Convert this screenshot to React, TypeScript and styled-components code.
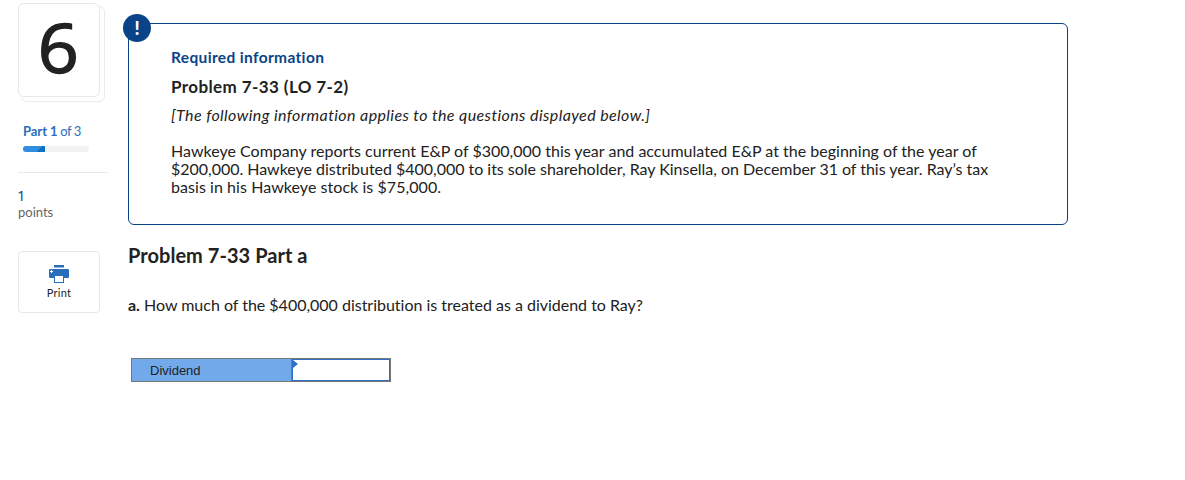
import React from 'react';
import styled, { createGlobalStyle } from 'styled-components';

const GlobalStyle = createGlobalStyle`
  * {
    box-sizing: border-box;
  }

  body {
    margin: 0;
    background-color: #ffffff;
    color: #222222;
    font-family: Lato, 'Liberation Sans', sans-serif;
    font-variant-ligatures: none;
  }
`;

const Page = styled.div`
  display: flex;
  align-items: flex-start;
  gap: 20px;
  width: 1185px;
  height: 480px;
  padding-left: 18px;
  overflow: hidden;
`;

const Sidebar = styled.aside`
  display: flex;
  flex-direction: column;
  width: 90px;
  padding-top: 3px;
`;

const QuestionNumber = styled.div`
  position: relative;
  display: flex;
  align-items: center;
  justify-content: center;
  width: 82px;
  height: 94px;
  background-color: #ffffff;
  border: 1px solid #e8e8e8;
  border-radius: 6px;
  font-family: 'Open Sans', 'Noto Sans', sans-serif;
  font-size: 67px;
  line-height: 90px;

  span {
    margin: -6px 2px 0 0;
    transform: scaleX(1.07);
    -webkit-text-stroke: 1.4px #222222;
  }

  /* second sheet peeking out from behind the card */
  &::after {
    content: '';
    position: absolute;
    z-index: -1;
    top: 2px;
    left: 2px;
    width: 82px;
    height: 94px;
    border: 1px solid #ebebeb;
    border-radius: 6px;
  }
`;

const PartLabel = styled.div`
  margin: 26px 0 0 5px;
  font-size: 13px;
  line-height: 17px;
  letter-spacing: -0.5px;
  color: #2a6ebb;
  white-space: nowrap;

  b {
    letter-spacing: -0.05px;
  }
`;

const ProgressTrack = styled.div`
  width: 66px;
  height: 6px;
  margin: 6px 0 0 5px;
  border-radius: 3px;
  background-color: #f2f2f2;
  overflow: hidden;
`;

const ProgressFill = styled.div`
  height: 100%;
  background: linear-gradient(135deg, #308de0 0 68%, #0b70c4 68%);
`;

const Divider = styled.hr`
  width: 90px;
  height: 1px;
  margin: 20px 0 13px;
  border: 0;
  background-color: #e9e9e9;
`;

const PointsValue = styled.div`
  margin: 0 0 1px -1px;
  font-family: 'Open Sans', 'Noto Sans', sans-serif;
  font-size: 15px;
  line-height: 18px;
  color: #0a4387;
`;

const PointsLabel = styled.div`
  font-size: 13px;
  line-height: 14px;
  color: #666666;
`;

const PrintButton = styled.button`
  display: flex;
  flex-direction: column;
  align-items: center;
  width: 82px;
  height: 62px;
  margin-top: 32px;
  padding: 13px 0 0;
  border: 1px solid #e8e8e8;
  border-radius: 4px;
  background-color: #ffffff;
  color: #222222;
  font-family: inherit;
  font-size: 11px;
  line-height: 13px;
  letter-spacing: 0.3px;

  svg {
    display: block;
    margin-bottom: 3px;
  }
`;

const Content = styled.main`
  width: 940px;
  padding-top: 23px;
`;

const InfoBox = styled.section`
  position: relative;
  height: 202px;
  padding: 24px 42px 0;
  border: 1px solid #0a4387;
  border-radius: 6px;
`;

const InfoBadge = styled.div`
  position: absolute;
  top: -10px;
  left: -6px;
  width: 28px;
  height: 28px;
  border-radius: 50%;
  background-color: #0a4387;
  color: #ffffff;
  font-size: 18px;
  font-weight: 900;
  line-height: 28px;
  text-align: center;
`;

const InfoLabel = styled.h2<{ $tracking: number }>`
  margin: 0;
  font-size: 15.5px;
  font-weight: 700;
  line-height: 18px;
  letter-spacing: ${({ $tracking }) => $tracking}px;
  color: #0a4387;
`;

const InfoTitle = styled.h3<{ $tracking: number }>`
  margin: 11px 0 0;
  font-size: 17px;
  font-weight: 700;
  line-height: 20px;
  letter-spacing: ${({ $tracking }) => $tracking}px;
`;

const Line = styled.span<{ $tracking: number }>`
  display: block;
  width: fit-content;
  letter-spacing: ${({ $tracking }) => $tracking}px;
  white-space: nowrap;
`;

const InfoNote = styled.p`
  margin: 9px 0 0;
  font-size: 16px;
  font-style: italic;
  line-height: 18px;
`;

const InfoText = styled.p`
  margin: 18px 0 0;
  font-size: 16px;
  line-height: 18px;
`;

const PartTitle = styled.h1<{ $tracking: number }>`
  width: fit-content;
  margin: 18px 0 0;
  font-size: 20px;
  font-weight: 700;
  line-height: 24px;
  letter-spacing: ${({ $tracking }) => $tracking}px;
`;

const Question = styled.p`
  margin: 28px 0 0;
  font-size: 16px;
  line-height: 20px;
`;

const AnswerTable = styled.div`
  display: flex;
  width: 260px;
  height: 24px;
  margin: 43px 0 0 3px;
  border: 1px solid #777777;
`;

const AnswerLabel = styled.div`
  width: 160px;
  padding-left: 18px;
  border-right: 1px solid #777777;
  background-color: #72a9ea;
  font-family: 'Liberation Sans', Arial, sans-serif;
  font-size: 13px;
  line-height: 23px;
`;

const AnswerCell = styled.div`
  position: relative;
  flex: 1;
  border: 1px solid #2f6fc4;
  background-color: #ffffff;

  /* cell marker in the top left corner */
  &::before {
    content: '';
    position: absolute;
    top: 0;
    left: 0;
    border-top: 4px solid transparent;
    border-bottom: 4px solid transparent;
    border-left: 5px solid #2f6fc4;
  }
`;

const PrintIcon = () => (
  <svg width="20" height="18" viewBox="0 0 20 18">
    <rect x="5" y="0" width="10" height="2.5" fill="#2a6ebb" />
    <rect x="0" y="4" width="20" height="9" rx="1" fill="#2a6ebb" />
    <rect x="5" y="10" width="10" height="8" fill="#2a6ebb" />
    <rect x="6" y="11" width="8" height="6" fill="#ffffff" />
    <path d="M2.5 5v3M1 6.5h3" stroke="#ffffff" strokeWidth="1" />
  </svg>
);

const parts = { current: 1, total: 3 };

export default function App() {
  return (
    <>
      <GlobalStyle />
      <Page>
        <Sidebar>
          <QuestionNumber>
            <span>6</span>
          </QuestionNumber>
          <PartLabel>
            <b>Part {parts.current}</b> of {parts.total}
          </PartLabel>
          <ProgressTrack>
            <ProgressFill style={{ width: `${(parts.current / parts.total) * 100}%` }} />
          </ProgressTrack>
          <Divider />
          <PointsValue>1</PointsValue>
          <PointsLabel>points</PointsLabel>
          <PrintButton>
            <PrintIcon />
            Print
          </PrintButton>
        </Sidebar>
        <Content>
          <InfoBox>
            <InfoBadge>!</InfoBadge>
            <InfoLabel $tracking={0.35}>Required information</InfoLabel>
            <InfoTitle $tracking={0.4}>Problem 7-33 (LO 7-2)</InfoTitle>
            <InfoNote>
              <Line $tracking={0.4}>
                [The following information applies to the questions displayed below.]
              </Line>
            </InfoNote>
            <InfoText>
              <Line $tracking={0.01}>
                Hawkeye Company reports current E&amp;P of $300,000 this year and accumulated E&amp;P at the beginning of the year of
              </Line>
              <Line $tracking={-0.02}>
                $200,000. Hawkeye distributed $400,000 to its sole shareholder, Ray Kinsella, on December 31 of this year. Ray’s tax
              </Line>
              <Line $tracking={0.06}>basis in his Hawkeye stock is $75,000.</Line>
            </InfoText>
          </InfoBox>
          <PartTitle $tracking={0.04}>Problem 7-33 Part a</PartTitle>
          <Question>
            <Line $tracking={-0.01}>
              <b>a.</b> How much of the $400,000 distribution is treated as a dividend to Ray?
            </Line>
          </Question>
          <AnswerTable>
            <AnswerLabel>Dividend</AnswerLabel>
            <AnswerCell />
          </AnswerTable>
        </Content>
      </Page>
    </>
  );
}
